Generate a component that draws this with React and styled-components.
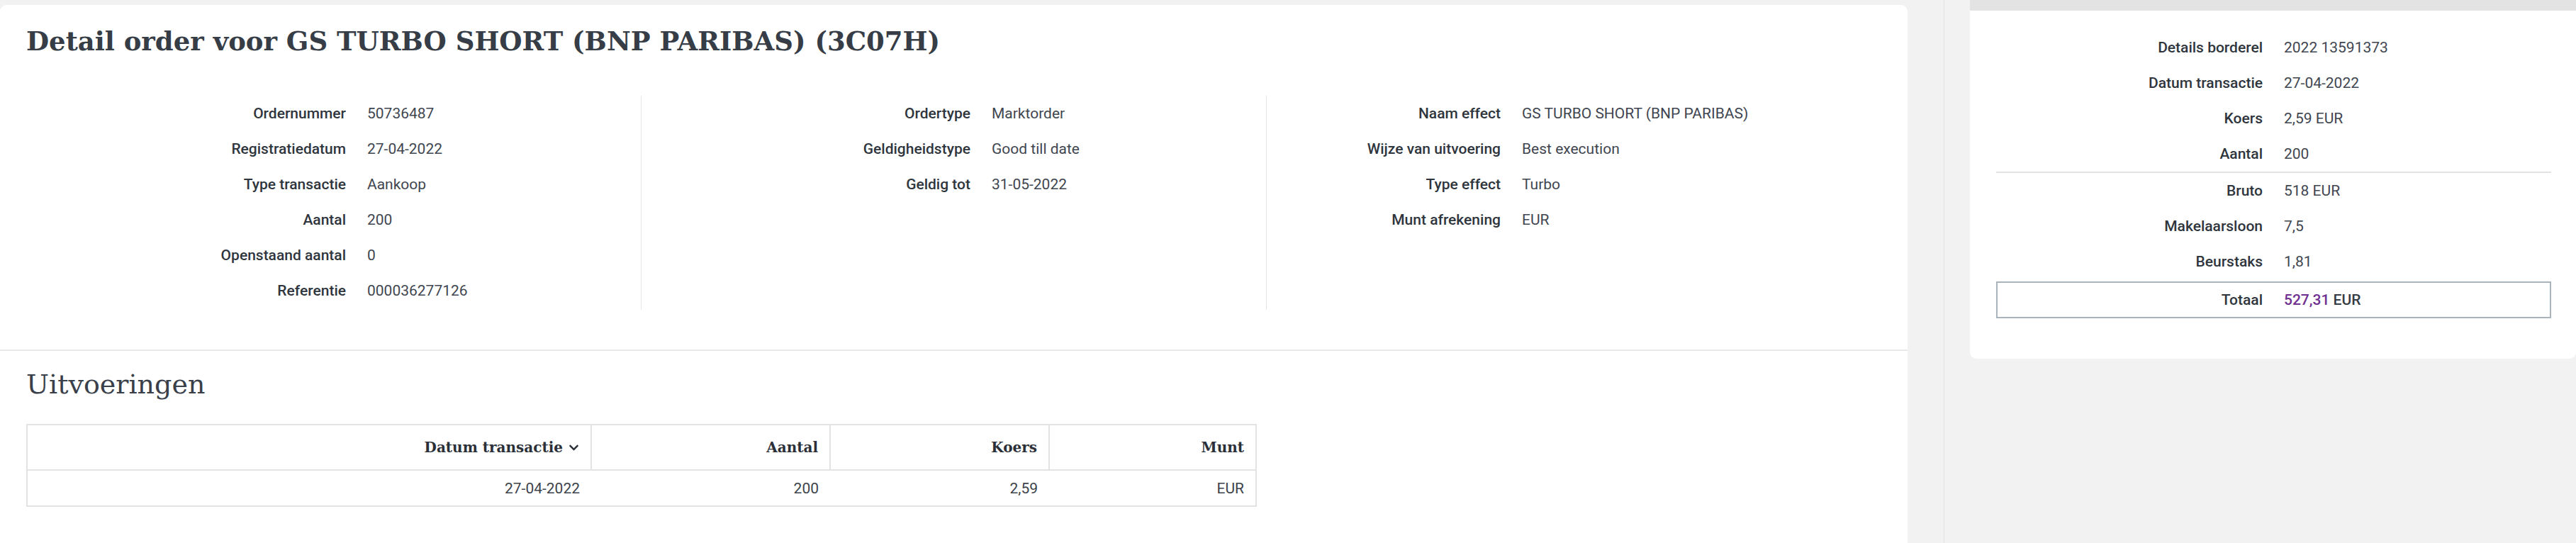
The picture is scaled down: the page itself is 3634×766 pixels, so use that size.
import React from 'react';
import styled, { createGlobalStyle } from 'styled-components';
import { FaChevronDown } from 'react-icons/fa';

const GlobalStyle = createGlobalStyle`
  html, body {
    margin: 0;
    padding: 0;
    background: #f2f2f2;
    font-family: Roboto, "Liberation Sans", sans-serif;
    color: #343a42;
  }
  * { box-sizing: border-box; }
`;

const Page = styled.div`
  display: flex;
  align-items: flex-start;
  min-height: 100vh;
`;

const MainCard = styled.div`
  width: 2691px;
  flex-shrink: 0;
  margin-top: 7px;
  min-height: calc(100vh - 7px);
  background: #fff;
  border-radius: 9px 9px 0 0;
`;

const Title = styled.h1`
  margin: 0;
  padding: 29px 37px 0;
  font-family: "DejaVu Serif", serif;
  font-weight: 700;
  font-size: 37px;
  line-height: 44px;
  color: #363d46;
`;

const InfoGrid = styled.div`
  display: grid;
  grid-template-columns: 867px 882px 1fr;
  margin: 55px 37px 0;
`;

const InfoColumn = styled.div`
  border-left: ${({ $divided }) => ($divided ? '1px solid #e6e6e6' : 'none')};
  padding-bottom: 2px;

  & > div {
    grid-template-columns: ${({ $labelWidth }) => $labelWidth}px 1fr;
  }
`;

const InfoRow = styled.div`
  display: grid;
  column-gap: 30px;
  align-items: center;
  height: 50px;
  font-size: 21px;
`;

const Label = styled.span`
  text-align: right;
  font-weight: 500;
  color: #2f353d;
  white-space: nowrap;
`;

const Value = styled.span`
  font-weight: 400;
  color: #3f4650;
  white-space: nowrap;
`;

const SectionDivider = styled.hr`
  margin: 56px 0 0;
  border: none;
  border-top: 2px solid #e8e8e8;
`;

const SectionTitle = styled.h2`
  margin: 25px 0 0;
  padding: 0 37px;
  font-family: "DejaVu Serif", serif;
  font-weight: 400;
  font-size: 38px;
  line-height: 44px;
  color: #3a4049;
`;

const TableWrap = styled.div`
  padding: 34px 37px 0;
`;

const ExecTable = styled.table`
  width: 1734px;
  border-collapse: collapse;
  table-layout: fixed;
  border: 2px solid #e3e3e3;
`;

const HeadCell = styled.th`
  height: 64px;
  padding: 0 16px 0 10px;
  text-align: right;
  font-family: "DejaVu Serif", serif;
  font-weight: 700;
  font-size: 20px;
  color: #2b3038;
  border-right: 2px solid #e3e3e3;
  border-bottom: 2px solid #e3e3e3;
  white-space: nowrap;

  &:last-child { border-right: none; }

  svg {
    margin-left: 8px;
    vertical-align: -1px;
  }
`;

const BodyCell = styled.td`
  height: 51px;
  padding: 0 16px;
  text-align: right;
  font-size: 21px;
  color: #3d434b;
`;

const Gutter = styled.div`
  width: 88px;
  flex-shrink: 0;
  align-self: stretch;
  display: flex;
  justify-content: flex-start;
  padding-left: 51px;

  &::before {
    content: '';
    width: 1px;
    background: #e0e0e0;
  }
`;

const SideCard = styled.div`
  flex: 1;
  background: #fff;
  border-top: 15px solid #e3e3e3;
  border-radius: 0 0 9px 9px;
  padding: 27px 35px 57px 37px;
`;

const SideRow = styled.div`
  display: grid;
  grid-template-columns: 376px 1fr;
  column-gap: 30px;
  align-items: center;
  height: 50px;
  font-size: 21px;
`;

const SideDivider = styled.div`
  height: 2px;
  background: #e3e3e3;
`;

const TotalRow = styled(SideRow)`
  margin-top: 3px;
  height: 52px;
  grid-template-columns: 374px 1fr;
  border: 2px solid #a9b4bc;
`;

const TotalValue = styled.span`
  font-weight: 500;
  color: #353b43;

  b {
    font-weight: 500;
    color: #6e2f91;
  }
`;

const orderInfo = [
  {
    labelWidth: 451,
    rows: [
      ['Ordernummer', '50736487'],
      ['Registratiedatum', '27-04-2022'],
      ['Type transactie', 'Aankoop'],
      ['Aantal', '200'],
      ['Openstaand aantal', '0'],
      ['Referentie', '000036277126'],
    ],
  },
  {
    labelWidth: 464,
    rows: [
      ['Ordertype', 'Marktorder'],
      ['Geldigheidstype', 'Good till date'],
      ['Geldig tot', '31-05-2022'],
    ],
  },
  {
    labelWidth: 330,
    rows: [
      ['Naam effect', 'GS TURBO SHORT (BNP PARIBAS)'],
      ['Wijze van uitvoering', 'Best execution'],
      ['Type effect', 'Turbo'],
      ['Munt afrekening', 'EUR'],
    ],
  },
];

const columns = [
  { title: 'Datum transactie', width: 796, sorted: true },
  { title: 'Aantal', width: 337 },
  { title: 'Koers', width: 309 },
  { title: 'Munt', width: 292 },
];

const executions = [['27-04-2022', '200', '2,59', 'EUR']];

const borderelTop = [
  ['Details borderel', '2022 13591373'],
  ['Datum transactie', '27-04-2022'],
  ['Koers', '2,59 EUR'],
  ['Aantal', '200'],
];

const borderelCosts = [
  ['Bruto', '518 EUR'],
  ['Makelaarsloon', '7,5'],
  ['Beurstaks', '1,81'],
];

const App = () => {
  return (
    <>
      <GlobalStyle />
      <Page>
        <MainCard>
          <Title>Detail order voor GS TURBO SHORT (BNP PARIBAS) (3C07H)</Title>

          <InfoGrid>
            {orderInfo.map((col, i) => (
              <InfoColumn key={i} $divided={i > 0} $labelWidth={col.labelWidth}>
                {col.rows.map(([label, value]) => (
                  <InfoRow key={label}>
                    <Label>{label}</Label>
                    <Value>{value}</Value>
                  </InfoRow>
                ))}
              </InfoColumn>
            ))}
          </InfoGrid>

          <SectionDivider />

          <SectionTitle>Uitvoeringen</SectionTitle>
          <TableWrap>
            <ExecTable>
              <colgroup>
                {columns.map((c) => (
                  <col key={c.title} style={{ width: c.width }} />
                ))}
              </colgroup>
              <thead>
                <tr>
                  {columns.map((c) => (
                    <HeadCell key={c.title}>
                      {c.title}
                      {c.sorted && <FaChevronDown size={15} />}
                    </HeadCell>
                  ))}
                </tr>
              </thead>
              <tbody>
                {executions.map((row, i) => (
                  <tr key={i}>
                    {row.map((cell, j) => (
                      <BodyCell key={j}>{cell}</BodyCell>
                    ))}
                  </tr>
                ))}
              </tbody>
            </ExecTable>
          </TableWrap>
        </MainCard>

        <Gutter />

        <SideCard>
          {borderelTop.map(([label, value]) => (
            <SideRow key={label}>
              <Label>{label}</Label>
              <Value>{value}</Value>
            </SideRow>
          ))}
          <SideDivider />
          {borderelCosts.map(([label, value]) => (
            <SideRow key={label}>
              <Label>{label}</Label>
              <Value>{value}</Value>
            </SideRow>
          ))}
          <TotalRow>
            <Label>Totaal</Label>
            <TotalValue>
              <b>527,31</b> EUR
            </TotalValue>
          </TotalRow>
        </SideCard>
      </Page>
    </>
  );
};

export default App;
